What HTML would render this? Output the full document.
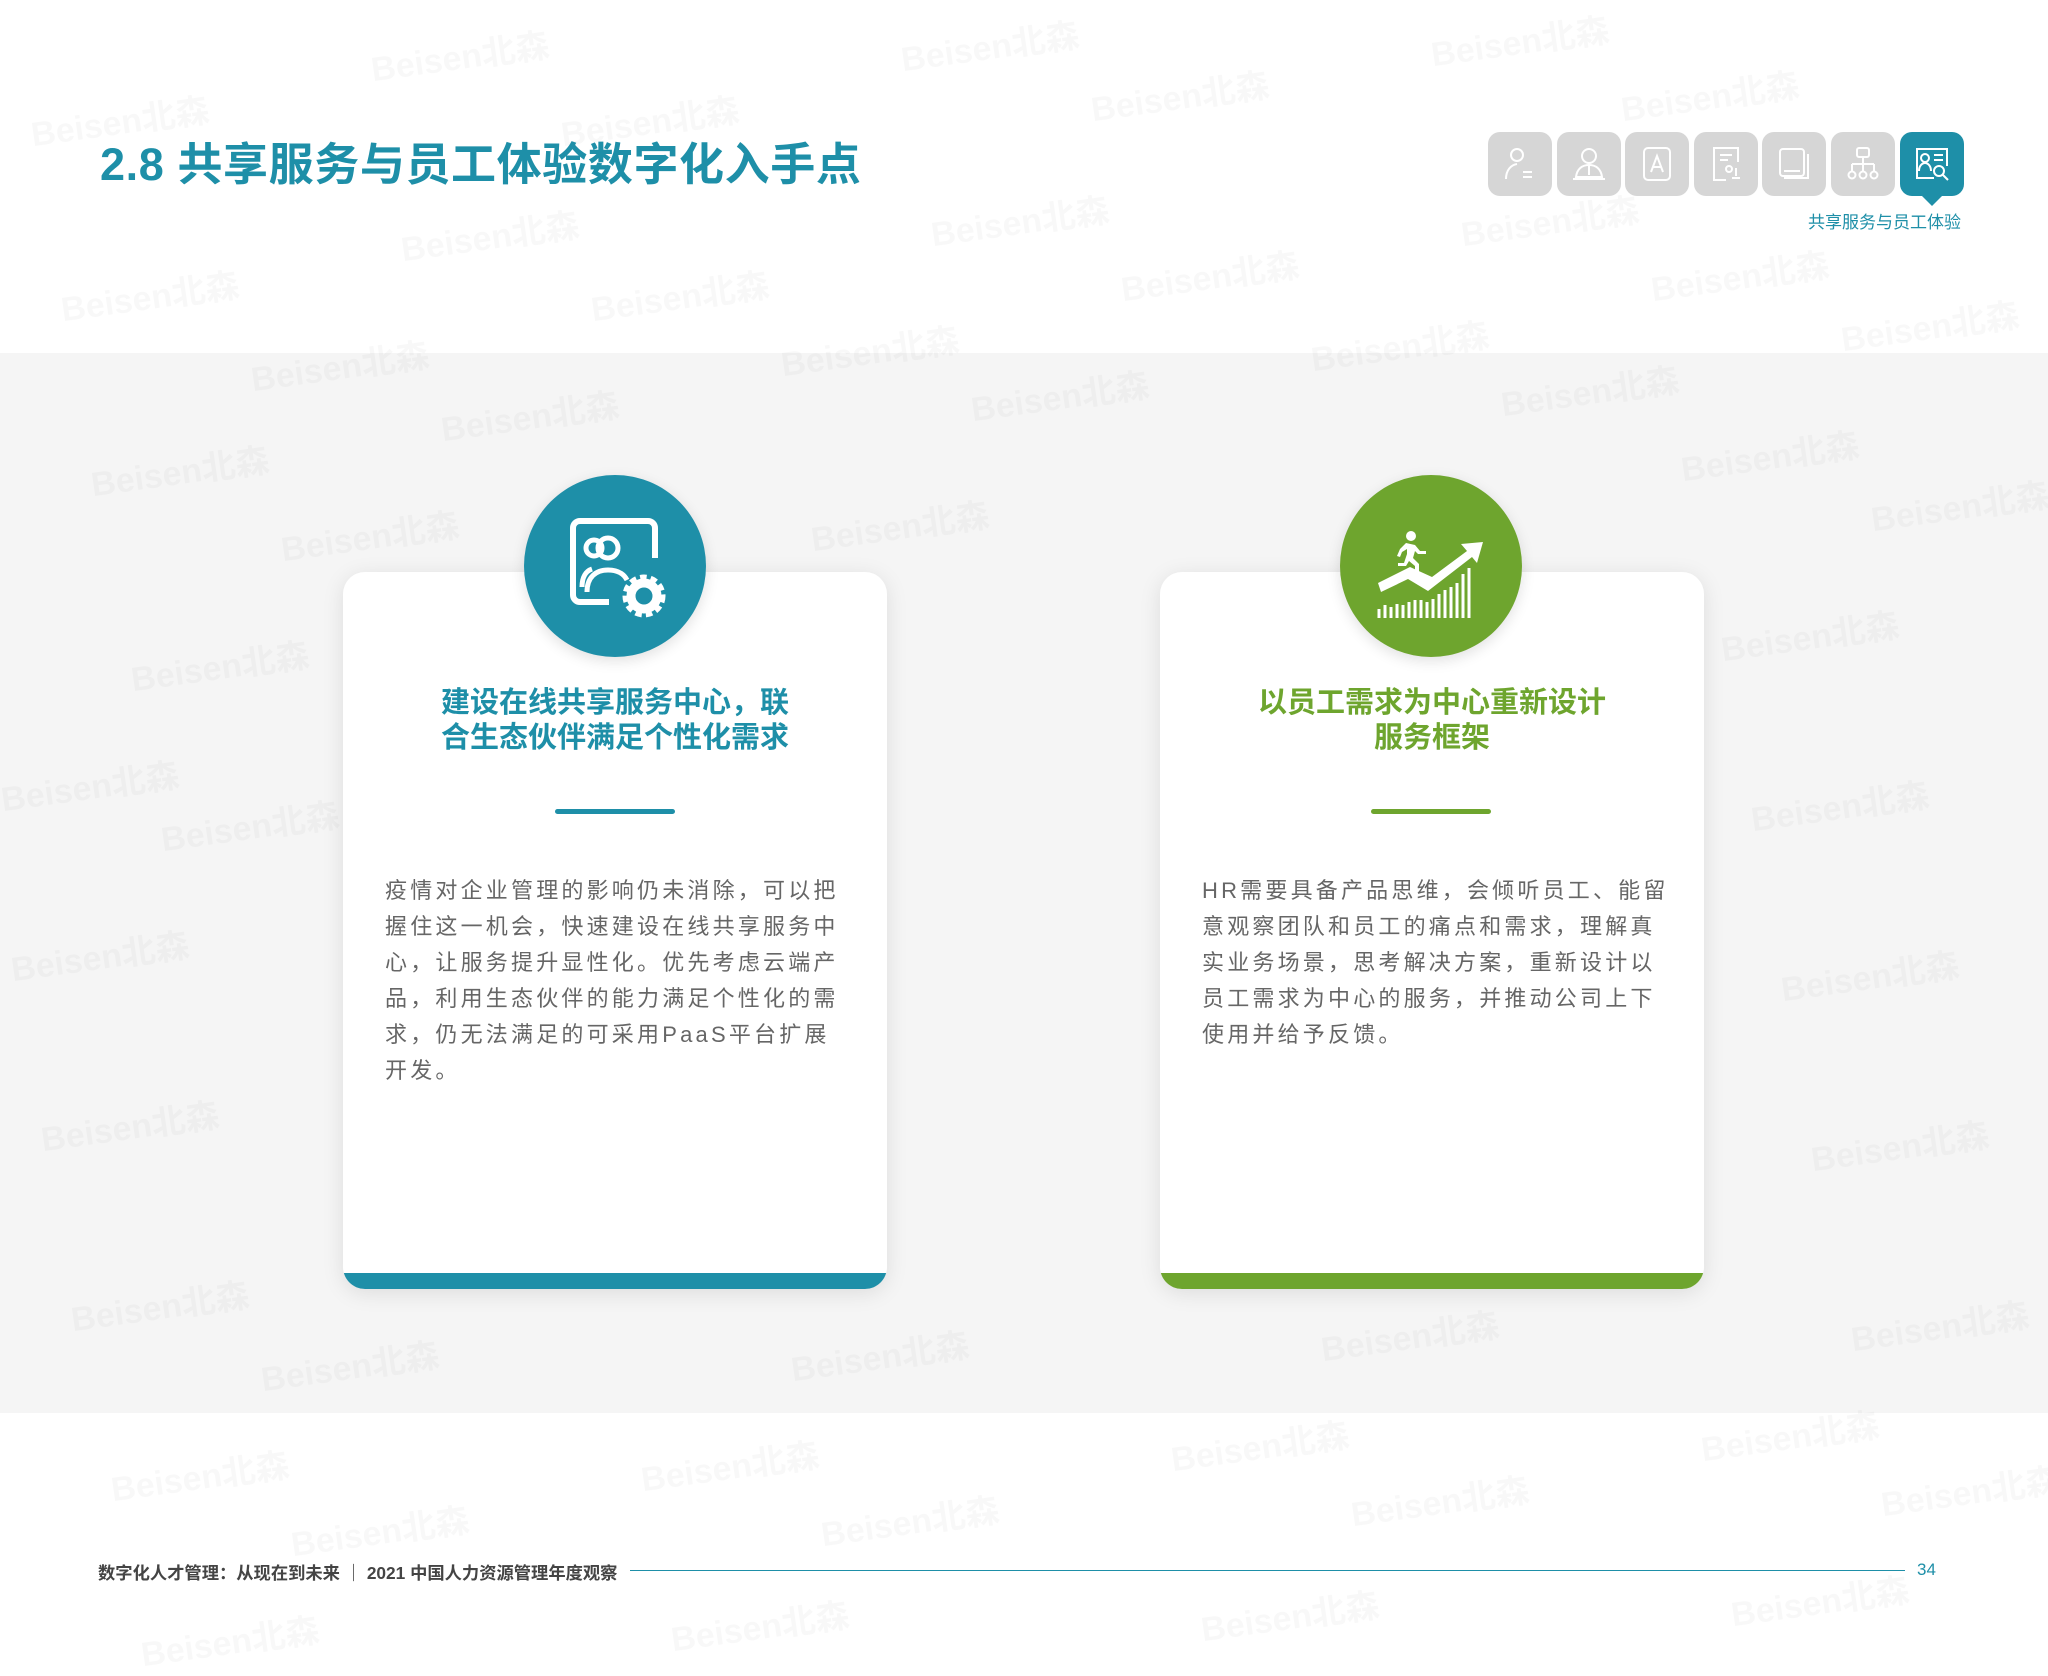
<!DOCTYPE html>
<html><head><meta charset="utf-8"><style>
*{margin:0;padding:0;box-sizing:border-box}
body{width:2048px;height:1654px;background:#fff;position:relative;overflow:hidden;font-family:"Liberation Sans","Noto Sans CJK SC",sans-serif}
.abs{position:absolute}
.title{left:100px;top:128px;font-size:45px;font-weight:bold;color:#1e8fa8;letter-spacing:0.6px;white-space:nowrap}
.ic{position:absolute;top:132px;width:64px;height:64px;border-radius:12px;background:#d6d6d6}
.ic svg{position:absolute;left:14px;top:14px;width:36px;height:36px}
.band{left:0;top:353px;width:2048px;height:1060px;background:#f5f5f5}
.card{position:absolute;top:572px;width:544px;height:717px;background:#fff;border-radius:22px;box-shadow:0 4px 22px rgba(0,0,0,0.10);overflow:hidden}
.card .bar{position:absolute;left:0;bottom:0;width:100%;height:16px}
.circ{position:absolute;top:475px;width:182px;height:182px;border-radius:50%;box-shadow:0 4px 14px rgba(0,0,0,0.12)}
.h{position:absolute;top:686px;width:544px;text-align:center;font-size:29px;font-weight:bold;line-height:35px}
.div{position:absolute;top:809px;width:120px;height:5px;border-radius:3px}
.body{position:absolute;top:873px;font-size:22px;line-height:36px;letter-spacing:3.2px;color:#666;white-space:nowrap}
.wm{position:absolute;font-size:34px;font-weight:bold;color:rgba(0,0,0,0.028);transform:rotate(-8deg);white-space:nowrap}
</style></head><body>
<div class="abs band"></div>

<div class="wm" style="left:370px;top:30px">Beisen北森</div>
<div class="wm" style="left:900px;top:20px">Beisen北森</div>
<div class="wm" style="left:1430px;top:15px">Beisen北森</div>
<div class="wm" style="left:30px;top:95px">Beisen北森</div>
<div class="wm" style="left:560px;top:95px">Beisen北森</div>
<div class="wm" style="left:1090px;top:70px">Beisen北森</div>
<div class="wm" style="left:1620px;top:70px">Beisen北森</div>
<div class="wm" style="left:400px;top:210px">Beisen北森</div>
<div class="wm" style="left:930px;top:195px">Beisen北森</div>
<div class="wm" style="left:1460px;top:195px">Beisen北森</div>
<div class="wm" style="left:60px;top:270px">Beisen北森</div>
<div class="wm" style="left:590px;top:270px">Beisen北森</div>
<div class="wm" style="left:1120px;top:250px">Beisen北森</div>
<div class="wm" style="left:1650px;top:250px">Beisen北森</div>
<div class="wm" style="left:250px;top:340px">Beisen北森</div>
<div class="wm" style="left:780px;top:325px">Beisen北森</div>
<div class="wm" style="left:1310px;top:320px">Beisen北森</div>
<div class="wm" style="left:1840px;top:300px">Beisen北森</div>
<div class="wm" style="left:90px;top:445px">Beisen北森</div>
<div class="wm" style="left:440px;top:390px">Beisen北森</div>
<div class="wm" style="left:970px;top:370px">Beisen北森</div>
<div class="wm" style="left:1500px;top:365px">Beisen北森</div>
<div class="wm" style="left:280px;top:510px">Beisen北森</div>
<div class="wm" style="left:810px;top:500px">Beisen北森</div>
<div class="wm" style="left:1680px;top:430px">Beisen北森</div>
<div class="wm" style="left:1870px;top:480px">Beisen北森</div>
<div class="wm" style="left:130px;top:640px">Beisen北森</div>
<div class="wm" style="left:1720px;top:610px">Beisen北森</div>
<div class="wm" style="left:0px;top:760px">Beisen北森</div>
<div class="wm" style="left:160px;top:800px">Beisen北森</div>
<div class="wm" style="left:1750px;top:780px">Beisen北森</div>
<div class="wm" style="left:10px;top:930px">Beisen北森</div>
<div class="wm" style="left:1780px;top:950px">Beisen北森</div>
<div class="wm" style="left:40px;top:1100px">Beisen北森</div>
<div class="wm" style="left:1810px;top:1120px">Beisen北森</div>
<div class="wm" style="left:70px;top:1280px">Beisen北森</div>
<div class="wm" style="left:260px;top:1340px">Beisen北森</div>
<div class="wm" style="left:790px;top:1330px">Beisen北森</div>
<div class="wm" style="left:1320px;top:1310px">Beisen北森</div>
<div class="wm" style="left:1850px;top:1300px">Beisen北森</div>
<div class="wm" style="left:110px;top:1450px">Beisen北森</div>
<div class="wm" style="left:640px;top:1440px">Beisen北森</div>
<div class="wm" style="left:1170px;top:1420px">Beisen北森</div>
<div class="wm" style="left:1700px;top:1410px">Beisen北森</div>
<div class="wm" style="left:290px;top:1505px">Beisen北森</div>
<div class="wm" style="left:820px;top:1495px">Beisen北森</div>
<div class="wm" style="left:1350px;top:1475px">Beisen北森</div>
<div class="wm" style="left:1880px;top:1465px">Beisen北森</div>
<div class="wm" style="left:140px;top:1615px">Beisen北森</div>
<div class="wm" style="left:670px;top:1600px">Beisen北森</div>
<div class="wm" style="left:1200px;top:1590px">Beisen北森</div>
<div class="wm" style="left:1730px;top:1575px">Beisen北森</div>

<div class="abs title">2.8 共享服务与员工体验数字化入手点</div>

<div class="ic" style="left:1488px"><svg viewBox="0 0 36 36" fill="none" stroke="#fff" stroke-width="2"><circle cx="15" cy="9" r="6"/><path d="M4 33c0-9 5-14 11-15"/><path d="M21 26h9M21 31h9"/></svg></div>
<div class="ic" style="left:1557px"><svg viewBox="0 0 36 36" fill="none" stroke="#fff" stroke-width="2"><circle cx="18" cy="10" r="7"/><path d="M5 31c1-8 6-12 13-12s12 4 13 12z"/><path d="M18 20v9"/><path d="M2 33h32"/></svg></div>
<div class="ic" style="left:1625px"><svg viewBox="0 0 36 36" fill="none" stroke="#fff" stroke-width="2"><rect x="5" y="2" width="26" height="32" rx="4"/><path d="M12 26l6-16 6 16M14 21h8"/></svg></div>
<div class="ic" style="left:1694px"><svg viewBox="0 0 36 36" fill="none" stroke="#fff" stroke-width="2"><path d="M30 16V2H6v32h12"/><path d="M12 9h12M12 14h8"/><circle cx="21" cy="23" r="3"/><path d="M28 22v8M24 32h8"/></svg></div>
<div class="ic" style="left:1762px"><svg viewBox="0 0 36 36" fill="none" stroke="#fff" stroke-width="2"><rect x="4" y="3" width="24" height="27" rx="3"/><path d="M32 8v24H8"/><path d="M8 25h16"/></svg></div>
<div class="ic" style="left:1831px"><svg viewBox="0 0 36 36" fill="none" stroke="#fff" stroke-width="2"><rect x="12" y="2" width="12" height="9" rx="2"/><path d="M18 11v7M7 18h22M7 18v7M18 18v7M29 18v7"/><circle cx="7" cy="29" r="3.5"/><circle cx="18" cy="29" r="3.5"/><circle cx="29" cy="29" r="3.5"/></svg></div>
<div class="ic" style="left:1900px;background:#1e8fa8"><svg viewBox="0 0 36 36" fill="none" stroke="#fff" stroke-width="2"><path d="M20 32H3V3h30v17"/><circle cx="11" cy="12" r="4"/><path d="M5 25c0-5 3-8 6-8s6 3 6 8"/><path d="M20 9h9M20 14h9"/><circle cx="25" cy="25" r="5"/><path d="M29 29l5 5"/></svg></div>
<div class="abs" style="left:1922px;top:196px;width:0;height:0;border-left:10px solid transparent;border-right:10px solid transparent;border-top:10px solid #1e8fa8"></div>
<div class="abs" style="left:1808px;top:208px;font-size:17px;color:#1e8fa8;white-space:nowrap">共享服务与员工体验</div>

<div class="card" style="left:343px"><div class="bar" style="background:#1e8fa8"></div></div>
<div class="card" style="left:1160px"><div class="bar" style="background:#6ea52e"></div></div>

<div class="circ" style="left:524px;background:#1e8fa8">
<svg viewBox="0 0 182 182" style="position:absolute;left:0;top:0;width:182px;height:182px" fill="none" stroke="#fff">
<path d="M85 127H56a7 7 0 0 1-7-7V53a7 7 0 0 1 7-7h68a7 7 0 0 1 7 7v30" stroke-width="6"/>
<circle cx="70" cy="73" r="8" stroke-width="5"/>
<circle cx="84" cy="73" r="10" stroke-width="5"/>
<path d="M63 117c0-15 9-22 21-22s17 6 19 10" stroke-width="5"/>
<path d="M58 112c0-10 4-16 10-18" stroke-width="5"/>
<circle cx="120" cy="121" r="16" stroke-width="11" stroke-dasharray="5.5 3.5"/>
<circle cx="120" cy="121" r="13" stroke-width="9"/>
</svg></div>
<div class="circ" style="left:1340px;background:#6ea52e">
<svg viewBox="0 0 182 182" style="position:absolute;left:0;top:0;width:182px;height:182px">
<g fill="#fff">
<circle cx="71" cy="61" r="5"/>
<path d="M66 68l9 2 5 6 6 0 0 3-8 0-3-3-2 7 6 6 0 11-4 0 0-9-6-5-3 5-8 0 0-3 6 0 3-9 0-5-5 3-2 5-3-1 3-7z"/>
<path d="M38 108l32-16 22 10 35-26-6-7 22-2-6 21-5-6-44 34-20-12-27 13z"/>
</g>
<g stroke="#fff" stroke-width="3">
<path d="M39 143v-9M45 143v-13M51 143v-11M57 143v-14M63 143v-13M69 143v-16M75 143v-18M81 143v-18M87 143v-16M93 143v-19M99 143v-24M105 143v-28M111 143v-31M117 143v-35M123 143v-44M129 143v-50"/>
</g></svg></div>

<div class="h" style="left:343px;color:#1e8fa8">建设在线共享服务中心，联<br>合生态伙伴满足个性化需求</div>
<div class="h" style="left:1160px;color:#6ea52e">以员工需求为中心重新设计<br>服务框架</div>
<div class="div" style="left:555px;background:#1e8fa8"></div>
<div class="div" style="left:1371px;background:#6ea52e"></div>

<div class="body" style="left:385px">疫情对企业管理的影响仍未消除，可以把<br>握住这一机会，快速建设在线共享服务中<br>心，让服务提升显性化。优先考虑云端产<br>品，利用生态伙伴的能力满足个性化的需<br>求，仍无法满足的可采用PaaS平台扩展<br>开发。</div>
<div class="body" style="left:1202px">HR需要具备产品思维，会倾听员工、能留<br>意观察团队和员工的痛点和需求，理解真<br>实业务场景，思考解决方案，重新设计以<br>员工需求为中心的服务，并推动公司上下<br>使用并给予反馈。</div>

<div class="abs" style="left:98px;top:1559px;font-size:17.3px;color:#444;white-space:nowrap;font-weight:bold">数字化人才管理：从现在到未来 ｜ 2021 中国人力资源管理年度观察</div>
<div class="abs" style="left:630px;top:1570px;width:1275px;height:1px;background:#1e8fa8"></div>
<div class="abs" style="left:1917px;top:1560px;font-size:17px;color:#1e8fa8">34</div>
</body></html>
